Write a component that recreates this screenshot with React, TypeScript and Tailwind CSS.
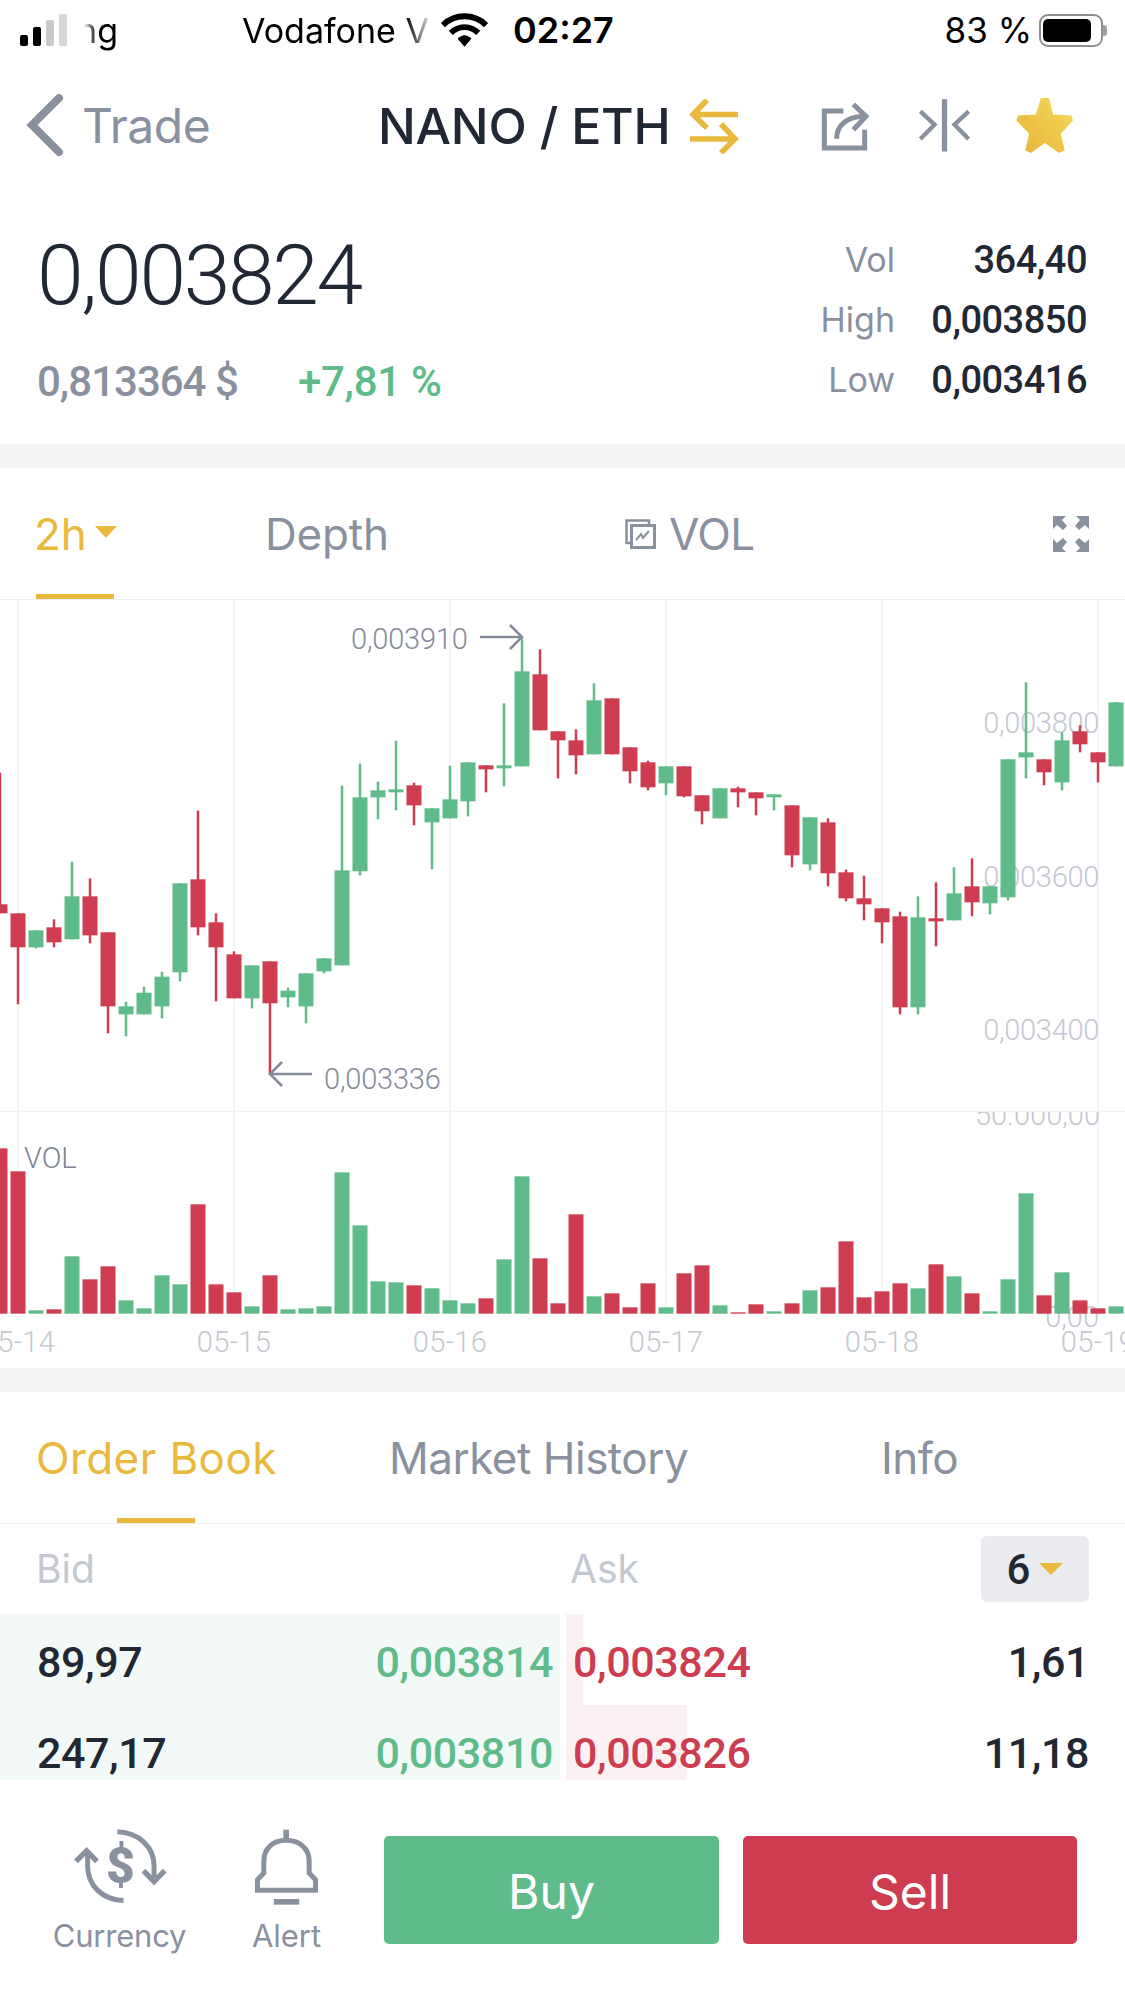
import React from "react";

const GREEN = "#5fbb89";
const RED = "#ce3c4f";

// [up, high, top, bottom, low] measured on a 3x crop, y = 600 + v / 3
const candles: [number, number, number, number, number][] = [
  [0, 518, 913, 940, 940], [0, 940, 940, 1042, 1213], [1, 991, 991, 1042, 1045], [0, 958, 982, 1027, 1042],
  [1, 785, 889, 1018, 1018], [0, 835, 889, 1006, 1030], [0, 997, 997, 1219, 1300], [1, 1205, 1219, 1243, 1309],
  [1, 1160, 1178, 1243, 1243], [1, 1115, 1130, 1219, 1255], [1, 850, 850, 1117, 1144], [0, 632, 838, 982, 1006],
  [0, 940, 967, 1042, 1204], [0, 1054, 1063, 1195, 1195], [1, 1096, 1096, 1195, 1225], [0, 1084, 1084, 1210, 1425],
  [1, 1163, 1172, 1192, 1222], [1, 1120, 1120, 1219, 1270], [1, 1075, 1075, 1114, 1120], [1, 557, 811, 1096, 1096],
  [1, 491, 592, 814, 826], [1, 545, 571, 592, 658], [1, 422, 568, 577, 631], [0, 548, 556, 616, 676],
  [1, 625, 625, 667, 808], [1, 497, 598, 655, 655], [1, 487, 487, 604, 649], [0, 496, 496, 508, 577],
  [1, 310, 496, 505, 559], [1, 112, 214, 499, 499], [0, 148, 223, 391, 391], [0, 394, 394, 421, 535],
  [0, 388, 421, 466, 523], [1, 250, 301, 463, 463], [0, 295, 295, 463, 463], [0, 442, 442, 514, 550],
  [0, 482, 487, 562, 571], [1, 499, 499, 550, 586], [0, 499, 499, 589, 592], [0, 586, 586, 634, 673],
  [1, 565, 565, 655, 655], [0, 560, 565, 577, 622], [0, 577, 577, 595, 646], [1, 583, 583, 592, 631],
  [0, 616, 616, 766, 802], [1, 652, 652, 793, 811], [0, 655, 667, 820, 859], [0, 809, 817, 895, 904],
  [0, 827, 895, 913, 961], [0, 925, 925, 967, 1030], [0, 935, 949, 1222, 1243], [1, 889, 952, 1222, 1243],
  [0, 847, 955, 964, 1039], [1, 802, 880, 961, 961], [0, 775, 859, 907, 949], [1, 859, 859, 910, 943],
  [1, 478, 478, 892, 901], [1, 247, 457, 472, 535], [0, 478, 478, 517, 556], [1, 397, 421, 547, 571],
  [0, 376, 394, 433, 457], [0, 457, 457, 487, 547], [1, 307, 307, 499, 499],
];

// bar tops on the same kind of crop, y = 1110 + v / 3, base at 611
const volumes = [
  115, 184, 601, 598, 439, 508, 469, 571, 595, 496, 523, 283, 523, 547, 589, 496, 598, 595, 589, 187, 346, 514, 517,
  526, 535, 571, 580, 565, 448, 199, 445, 580, 313, 559, 550, 592, 520, 592, 490, 466, 586, 607, 583, 604, 580, 541,
  532, 394, 562, 544, 520, 535, 463, 499, 550, 604, 508, 250, 556, 487, 571, 595, 589,
];

const gridX = [18, 234, 450, 666, 882, 1098];
const dates = ["05-14", "05-15", "05-16", "05-17", "05-18", "05-19"];

function Chart() {
  return (
    <svg viewBox="0 600 1125 768" className="block w-[1125px] h-[768px] font-['Roboto'] text-[29px] font-light">
      <defs>
        <clipPath id="volPane">
          <rect x="0" y="1112" width="1125" height="60" />
        </clipPath>
      </defs>
      {gridX.map((x) => (
        <line key={x} x1={x} x2={x} y1="600" y2="1314" stroke="#f1f2f4" strokeWidth="1.5" />
      ))}
      <line x1="0" x2="1125" y1="1111.5" y2="1111.5" stroke="#f1f2f4" strokeWidth="1.5" />

      <g fill="#c4c8d0">
        <text x="1099" y="733" textAnchor="end" letterSpacing="-0.3">0,003800</text>
        <text x="1099" y="887" textAnchor="end" letterSpacing="-0.3">0,003600</text>
        <text x="1099" y="1040" textAnchor="end" letterSpacing="-0.3">0,003400</text>
        <g clipPath="url(#volPane)">
          <text x="1100" y="1125" textAnchor="end">50.000,00</text>
        </g>
        <text x="1099" y="1327" textAnchor="end">0,00</text>
      </g>

      {candles.map(([up, hi, top, bot, lo], k) => {
        const x = 18 * k;
        const fill = up ? GREEN : RED;
        return (
          <g key={k} fill={fill}>
            <rect x={x - 1.25} y={600 + hi / 3} width="2.5" height={(lo - hi) / 3} />
            <rect x={x - 7.5} y={600 + top / 3} width="15" height={(bot - top) / 3} />
          </g>
        );
      })}

      {volumes.map((v, k) => (
        <rect
          key={k}
          x={18 * k - 7.5}
          y={1110 + v / 3}
          width="15"
          height={(611 - v) / 3}
          fill={candles[k][0] ? GREEN : RED}
        />
      ))}

      <g fill="#858c99">
        <text x="351" y="649" letterSpacing="-0.2">0,003910</text>
        <text x="324" y="1089" letterSpacing="-0.2">0,003336</text>
        <text x="24" y="1168" fill="#7d8493">VOL</text>
      </g>
      <path d="M480 637H522M510 625L522 637L510 649" fill="none" stroke="#858c99" strokeWidth="2.5" />
      <path d="M312 1074H270M282 1062L270 1074L282 1086" fill="none" stroke="#858c99" strokeWidth="2.5" />

      <g fill="#c4c8d0" textAnchor="middle" letterSpacing="0.4">
        {gridX.map((x, i) => (
          <text key={x} x={x} y="1352">{dates[i]}</text>
        ))}
      </g>
    </svg>
  );
}

function StatusBar() {
  return (
    <div className="relative flex h-[60px] items-center font-['Inter'] text-[34px] text-black">
      <div className="ml-[20px] flex h-[32px] items-end gap-[5px]">
        <div className="h-[11px] w-[8px] rounded-[2px] bg-black" />
        <div className="h-[19px] w-[8px] rounded-[2px] bg-black" />
        <div className="h-[26px] w-[8px] rounded-[2px] bg-[#c9c9c9]" />
        <div className="h-[32px] w-[8px] rounded-[2px] bg-[#d6d6d6]" />
      </div>
      <div className="ml-[5px] w-[46px] text-right [mask-image:linear-gradient(90deg,transparent_25%,black_55%)]">ng</div>
      <div className="ml-[124px] w-[186px] whitespace-nowrap [mask-image:linear-gradient(90deg,black_88%,#0003)]">
        Vodafone V
      </div>
      <svg viewBox="0 0 48 34" className="ml-[13px] h-[34px] w-[47px]">
        <path d="M2 12C14 0 34 0 46 12M10 20C18 12 30 12 38 20" fill="none" stroke="black" strokeWidth="6" />
        <path d="M17 26C21 21 27 21 31 26L24 34Z" fill="black" />
      </svg>
      <div className="ml-[25px] text-[36px] font-semibold">02:27</div>
      <div className="ml-auto mr-[7px] text-[35px]">83 %</div>
      <div className="mr-[18px] flex items-center">
        <div className="flex h-[33px] w-[64px] items-center rounded-[9px] border-[2.5px] border-[#8f8f8f] p-[2px]">
          <div className="h-[23px] w-[48px] rounded-[5px] bg-black" />
        </div>
        <div className="h-[11px] w-[4px] rounded-r-[3px] bg-[#a0a0a0]" />
      </div>
    </div>
  );
}

function NavBar() {
  return (
    <div className="flex h-[130px] items-center font-['Inter']">
      <svg viewBox="0 0 38 62" className="ml-[26px] h-[62px] w-[38px]">
        <path d="M33 4L6 31L33 58" fill="none" stroke="#8a919e" strokeWidth="8" strokeLinecap="round" />
      </svg>
      <div className="ml-[18px] mt-[2px] w-[296px] text-[48px] tracking-[-0.5px] text-[#8a919e]">Trade</div>
      <div className="mt-[3px] w-[311px] text-[50px] font-medium tracking-[-0.2px] text-[#212833]">NANO / ETH</div>
      <svg viewBox="0 0 50 55" className="mt-[3px] h-[55px] w-[50px] text-[#e9b93e]">
        <path d="M49 15.5H5M18 1L4 15.5L18 29M1 40H45M32 25L46 40L32 54" fill="none" stroke="currentColor" strokeWidth="5.5" />
      </svg>
      <svg viewBox="60 35 150 150" className="ml-[81px] mt-[3px] h-[50px] w-[50px] text-[#8a919e]">
        <path d="M130 62H73V173H194V118" fill="none" stroke="currentColor" strokeWidth="15" />
        <path d="M110 145C110 105 140 80 190 78" fill="none" stroke="currentColor" strokeWidth="15" />
        <path d="M160 42L198 78L160 118" fill="none" stroke="currentColor" strokeWidth="15" />
      </svg>
      <svg viewBox="355 25 160 165" className="ml-[48px] h-[55px] w-[53px] text-[#8a919e]">
        <path d="M435 28V186" fill="none" stroke="currentColor" strokeWidth="16" />
        <path d="M362 65L405 105L362 148M508 65L465 105L508 148" fill="none" stroke="currentColor" strokeWidth="13" />
      </svg>
      <svg viewBox="650 22 172 166" className="ml-[45px] h-[55px] w-[57px]">
        <defs>
          <linearGradient id="starFill" x1="0" y1="1" x2="1" y2="0">
            <stop offset="0" stopColor="#e6b338" />
            <stop offset="1" stopColor="#f5da5c" />
          </linearGradient>
        </defs>
        <path
          d="M725 22H750L762 72L817 75L822 90L785 130L797 180L780 188L737 158L695 188L678 180L690 130L651 90L656 75L710 72Z"
          fill="url(#starFill)"
        />
      </svg>
    </div>
  );
}

function Stats() {
  return (
    <div className="flex h-[254px] items-start justify-between pl-[37px] pr-[38px] pt-[40px] font-['Roboto']">
      <div>
        <div className="mt-[3px] text-[84px] font-light leading-[86px] tracking-[-2.3px] text-[#212833]">0,003824</div>
        <div className="mt-[33px] flex text-[42px] font-medium leading-[60px]">
          <span className="w-[261px] tracking-[-1px] text-[#8a919e]">0,813364 $</span>
          <span className="tracking-[-0.3px] text-[#5fbb89]">+7,81 %</span>
        </div>
      </div>
      <div className="grid grid-cols-[auto_160px] content-start gap-x-[32px] text-right text-[38px] font-medium leading-[60px]">
        <span className="font-['Inter'] text-[34px] font-normal text-[#8a919e]">Vol</span>
        <span className="tracking-[-0.5px] text-[#212833]">364,40</span>
        <span className="font-['Inter'] text-[34px] font-normal text-[#8a919e]">High</span>
        <span className="tracking-[-0.5px] text-[#212833]">0,003850</span>
        <span className="font-['Inter'] text-[34px] font-normal text-[#8a919e]">Low</span>
        <span className="tracking-[-0.5px] text-[#212833]">0,003416</span>
      </div>
    </div>
  );
}

function ChartTabs() {
  return (
    <div className="relative flex h-[132px] items-center border-b-[1.5px] border-[#eceef0] font-['Inter'] text-[44px] text-[#8a919e]">
      <div className="ml-[34px] w-[231px] text-[#e9b93e]">
        2h
        <span className="ml-[8px] inline-block h-0 w-0 border-x-[11px] border-t-[12px] border-x-transparent border-t-[#e9b93e] align-[12px]" />
      </div>
      <div className="w-[360px] tracking-[-0.2px]">Depth</div>
      <svg viewBox="0 0 31 30" className="h-[30px] w-[31px]">
        <path d="M5 24H1.5V1.5H24V6" fill="none" stroke="#8a919e" strokeWidth="2.5" />
        <rect x="6.5" y="6.5" width="23" height="22" fill="none" stroke="#8a919e" strokeWidth="3" />
        <path d="M11 21L16 15L18 19L24 12" fill="none" stroke="#8a919e" strokeWidth="2" />
      </svg>
      <div className="ml-[13px] tracking-[-0.6px]">VOL</div>
      <svg viewBox="0 0 36 36" className="ml-auto mr-[36px] h-[36px] w-[36px] text-[#8a919e]" fill="currentColor">
        <path d="M0 0H13L9 4L14 10L10 14L4 9L0 13ZM36 0H23L27 4L22 10L26 14L32 9L36 13ZM0 36H13L9 32L14 26L10 22L4 27L0 23ZM36 36H23L27 32L22 26L26 22L32 27L36 23Z" />
      </svg>
      <div className="absolute bottom-0 left-[36px] h-[5px] w-[78px] bg-[#e9b93e]" />
    </div>
  );
}

function BookTabs() {
  return (
    <div className="relative flex h-[132px] items-center border-b-[1.5px] border-[#eceef0] font-['Inter'] text-[44px] text-[#8a919e]">
      <div className="ml-[36px] w-[353px] tracking-[0.4px] text-[#e9b93e]">Order Book</div>
      <div className="w-[492px] tracking-[-0.5px]">Market History</div>
      <div className="tracking-[-0.5px]">Info</div>
      <div className="absolute bottom-0 left-[117px] h-[5px] w-[78px] bg-[#e9b93e]" />
    </div>
  );
}

function OrderRow({ size, bid, ask, askSize, depth }: { size: string; bid: string; ask: string; askSize: string; depth: number }) {
  return (
    <div className="flex h-[91px] gap-[6px] font-['Roboto'] text-[43px] font-medium tracking-[-0.4px]">
      <div className="flex w-[560px] items-center justify-between bg-[#f3f9f6] pl-[37px] pr-[7px] pt-[5px]">
        <span className="text-[#212833]">{size}</span>
        <span className="text-[#5fbb89]">{bid}</span>
      </div>
      <div className="relative flex flex-1 items-center justify-between pl-[7px] pr-[36px] pt-[5px]">
        <div className="absolute inset-y-0 left-0 bg-[#fbf1f3]" style={{ width: depth }} />
        <span className="relative text-[#ce3c4f]">{ask}</span>
        <span className="relative text-[#212833]">{askSize}</span>
      </div>
    </div>
  );
}

function OrderBook() {
  return (
    <div>
      <div className="flex h-[90px] items-center pl-[36px] pr-[36px] font-['Inter'] text-[39px] text-[#c4c8d0]">
        <div className="w-[534px]">Bid</div>
        <div>Ask</div>
        <div className="ml-auto flex h-[66px] w-[108px] items-center justify-center gap-[9px] rounded-[6px] bg-[#e9ebef] font-['Roboto'] text-[42px] font-medium text-[#212833]">
          6
          <span className="h-0 w-0 border-x-[12px] border-t-[12px] border-x-transparent border-t-[#e9b93e]" />
        </div>
      </div>
      <div className="h-[166px] overflow-hidden">
        <OrderRow size="89,97" bid="0,003814" ask="0,003824" askSize="1,61" depth={17} />
        <OrderRow size="247,17" bid="0,003810" ask="0,003826" askSize="11,18" depth={121} />
      </div>
    </div>
  );
}

function BottomBar() {
  return (
    <div className="flex items-start pt-[49px] font-['Inter'] text-[31px] text-[#8a919e]">
      <div className="ml-[54px] flex w-[131px] flex-col items-center">
        <svg viewBox="90 40 295 225" className="h-[75px] w-[98px]">
          <path d="M230 48C295 50 340 95 340 150V190" fill="none" stroke="#8a919e" strokeWidth="15" />
          <path d="M308 165L340 198L372 165" fill="none" stroke="#8a919e" strokeWidth="16" />
          <path d="M248 255C185 253 140 210 140 150V112" fill="none" stroke="#8a919e" strokeWidth="15" />
          <path d="M105 137L137 105L168 137" fill="none" stroke="#8a919e" strokeWidth="16" />
          <text x="239" y="203" textAnchor="middle" className="font-['Roboto'] text-[150px] font-black" fill="#8a919e">$</text>
        </svg>
        <div className="mt-[14px] leading-[36px] tracking-[-0.2px]">Currency</div>
      </div>
      <div className="ml-[67px] flex w-[69px] flex-col items-center">
        <svg viewBox="640 38 200 228" className="h-[76px] w-[67px] shrink-0">
          <path d="M739 40V72" fill="none" stroke="#8a919e" strokeWidth="17" />
          <path
            d="M653 222V190L672 170V135C672 95 700 72 739 72C778 72 808 95 808 135V170L827 190V222Z"
            fill="none"
            stroke="#8a919e"
            strokeWidth="15"
          />
          <rect x="702" y="248" width="76" height="17" fill="#8a919e" />
        </svg>
        <div className="mt-[13px] leading-[36px]">Alert</div>
      </div>
      <button className="ml-[63px] mt-[7px] h-[108px] w-[335px] rounded-[5px] bg-[#5fbb89] pt-[3px] text-[48px] text-white">Buy</button>
      <button className="ml-[24px] mt-[7px] h-[108px] w-[334px] rounded-[5px] bg-[#ce3c4f] pt-[3px] text-[48px] text-white">Sell</button>
    </div>
  );
}

export default function App() {
  return (
    <div className="h-[2001px] w-[1125px] overflow-hidden bg-white">
      <StatusBar />
      <NavBar />
      <Stats />
      <div className="h-[24px] bg-[#f3f4f6]" />
      <ChartTabs />
      <Chart />
      <div className="h-[24px] bg-[#f3f4f6]" />
      <BookTabs />
      <OrderBook />
      <BottomBar />
    </div>
  );
}
